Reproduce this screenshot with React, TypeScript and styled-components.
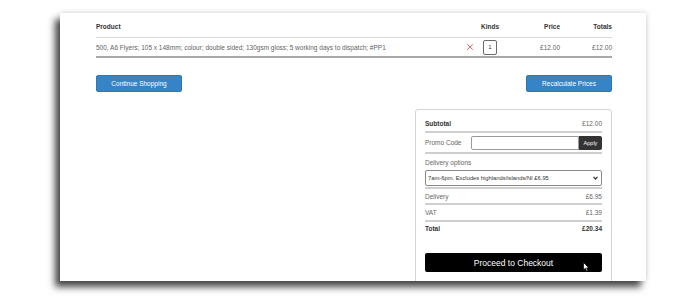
import React from 'react';
import styled, { createGlobalStyle } from 'styled-components';

const GlobalStyle = createGlobalStyle`
  html, body {
    margin: 0;
    padding: 0;
    background: #ffffff;
    font-family: 'Liberation Sans', Arial, sans-serif;
  }
`;

const Page = styled.div`
  width: 700px;
  height: 300px;
  padding: 13px 0 0 60px;
  box-sizing: border-box;
`;

const Card = styled.div`
  width: 586px;
  height: 268px;
  background: #ffffff;
  overflow: hidden;
  box-sizing: border-box;
  padding: 0 34px 0 36px;
  box-shadow: -5px 6px 7px rgba(0, 0, 0, 0.72), 1px -1px 5px rgba(0, 0, 0, 0.12);
`;

const CartGrid = styled.div`
  display: grid;
  grid-template-columns: 1fr 16px 24px 58px 52px;
  color: #5f5f5f;
  font-size: 6.5px;
`;

const HeadCell = styled.div<{ $align?: 'left' | 'center' | 'right' }>`
  font-weight: bold;
  color: #333333;
  text-align: ${p => p.$align || 'left'};
  padding: 10px 0 6px;
  line-height: 8px;
  border-bottom: 1px solid #d8d8d8;
`;

const BodyCell = styled.div<{ $align?: 'left' | 'center' | 'right' }>`
  display: flex;
  align-items: center;
  justify-content: ${p => (p.$align === 'right' ? 'flex-end' : p.$align === 'center' ? 'center' : 'flex-start')};
  height: 18px;
  border-bottom: 2px solid #a8a8a8;
`;

const QtyBox = styled.div`
  width: 14px;
  height: 15px;
  box-sizing: border-box;
  border: 1px solid #6a6a6a;
  border-radius: 2px;
  display: flex;
  align-items: center;
  justify-content: center;
  color: #333333;
  font-size: 6px;
`;

const ButtonRow = styled.div`
  display: flex;
  justify-content: space-between;
  margin-top: 17px;
`;

const BlueButton = styled.button`
  width: 86px;
  height: 17px;
  padding: 0;
  border: 1px solid #2f78b6;
  border-radius: 2px;
  background: #3683c6;
  color: #ffffff;
  font-family: inherit;
  font-size: 6.5px;
`;

const SummaryWrap = styled.div`
  display: flex;
  justify-content: flex-end;
  margin-top: 17px;
`;

const Summary = styled.div`
  width: 197px;
  height: 200px;
  box-sizing: border-box;
  border: 1px solid #d4d4d4;
  border-radius: 3px;
  padding: 0 9px;
  font-size: 6.5px;
  color: #666666;
`;

const SumRow = styled.div<{ $h: number; $top?: number; $line?: boolean; $bold?: boolean }>`
  display: flex;
  align-items: center;
  justify-content: space-between;
  box-sizing: border-box;
  height: ${p => p.$h}px;
  padding-top: ${p => p.$top || 0}px;
  border-bottom: ${p => (p.$line ? '2px solid #cfcfcf' : 'none')};
  font-weight: ${p => (p.$bold ? 'bold' : 'normal')};
  color: ${p => (p.$bold ? '#333333' : '#666666')};
`;

const PlainValue = styled.span`
  font-weight: normal;
  color: #666666;
`;

const PromoInput = styled.input`
  width: 108px;
  height: 14px;
  box-sizing: border-box;
  border: 1px solid #9a9a9a;
  border-radius: 2px 0 0 2px;
  margin: 0 0 0 auto;
  padding: 0;
`;

const ApplyButton = styled.button`
  width: 23px;
  height: 14px;
  padding: 0;
  border: none;
  border-radius: 0 2px 2px 0;
  background: #333333;
  color: #ffffff;
  font-family: inherit;
  font-size: 5.5px;
`;

const SelectRow = styled.div`
  padding-bottom: 1px;
  border-bottom: 2px solid #cfcfcf;
`;

const SelectBox = styled.div`
  display: flex;
  align-items: center;
  justify-content: space-between;
  height: 16px;
  box-sizing: border-box;
  border: 1px solid #8a8a8a;
  border-radius: 2px;
  padding: 0 3px 0 2px;
  font-size: 5.8px;
  color: #333333;
`;

const CheckoutButton = styled.div`
  position: relative;
  margin-top: 18px;
  height: 19px;
  border-radius: 2px;
  background: #000000;
  color: #ffffff;
  font-size: 8.5px;
  display: flex;
  align-items: center;
  justify-content: center;
`;

const Pointer = styled.svg`
  position: absolute;
  left: 158px;
  top: 9px;
`;

const RemoveIcon = () => (
  <svg width="8" height="8" viewBox="0 0 8 8">
    <path d="M1.2 1.2 L6.8 6.8 M6.8 1.2 L1.2 6.8" stroke="#ec5a55" strokeWidth="0.9" fill="none" />
  </svg>
);

const Chevron = () => (
  <svg width="5" height="4" viewBox="0 0 5 4">
    <path d="M0.5 0.8 L2.5 3 L4.5 0.8" stroke="#333" strokeWidth="1.2" fill="none" />
  </svg>
);

const App: React.FC = () => {
  return (
    <>
      <GlobalStyle />
      <Page>
        <Card>
          <CartGrid>
            <HeadCell>Product</HeadCell>
            <HeadCell />
            <HeadCell $align="center">Kinds</HeadCell>
            <HeadCell $align="right">Price</HeadCell>
            <HeadCell $align="right">Totals</HeadCell>

            <BodyCell>500, A6 Flyers; 105 x 148mm; colour; double sided; 130gsm gloss; 5 working days to dispatch; #PP1</BodyCell>
            <BodyCell $align="center"><RemoveIcon /></BodyCell>
            <BodyCell $align="center"><QtyBox>1</QtyBox></BodyCell>
            <BodyCell $align="right">£12.00</BodyCell>
            <BodyCell $align="right">£12.00</BodyCell>
          </CartGrid>

          <ButtonRow>
            <BlueButton>Continue Shopping</BlueButton>
            <BlueButton>Recalculate Prices</BlueButton>
          </ButtonRow>

          <SummaryWrap>
            <Summary>
              <SumRow $h={23} $top={5} $line $bold>
                <span>Subtotal</span>
                <PlainValue>£12.00</PlainValue>
              </SumRow>
              <SumRow $h={21} $line>
                <span>Promo Code</span>
                <PromoInput />
                <ApplyButton>Apply</ApplyButton>
              </SumRow>
              <SumRow $h={16}>
                <span>Delivery options</span>
              </SumRow>
              <SelectRow>
                <SelectBox>
                  <span>7am-6pm. Excludes highlands/islands/NI £6.95</span>
                  <Chevron />
                </SelectBox>
              </SelectRow>
              <SumRow $h={16} $line>
                <span>Delivery</span>
                <span>£6.95</span>
              </SumRow>
              <SumRow $h={17} $line>
                <span>VAT</span>
                <span>£1.39</span>
              </SumRow>
              <SumRow $h={13} $bold>
                <span>Total</span>
                <span>£20.34</span>
              </SumRow>
              <CheckoutButton>
                Proceed to Checkout
                <Pointer width="7" height="10" viewBox="0 0 7 10">
                  <path d="M0.5 0.5 L0.5 8 L2.3 6.3 L3.6 9.3 L4.8 8.8 L3.6 5.9 L6 5.9 Z" fill="#fff" stroke="#000" strokeWidth="0.7" />
                </Pointer>
              </CheckoutButton>
            </Summary>
          </SummaryWrap>
        </Card>
      </Page>
    </>
  );
};

export default App;
